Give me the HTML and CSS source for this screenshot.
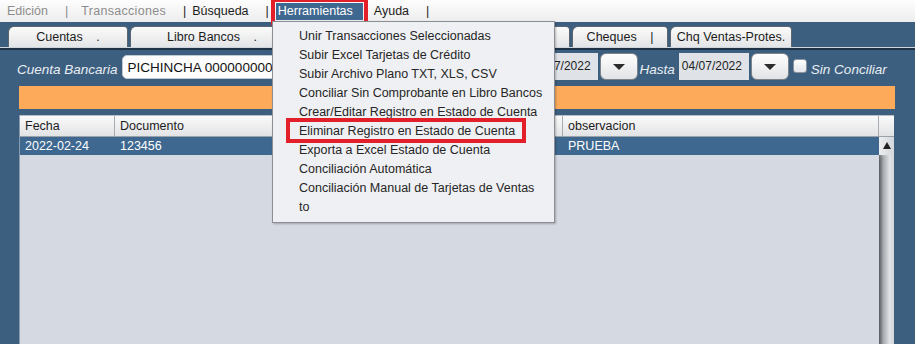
FILE: index.html
```html
<!DOCTYPE html>
<html lang="es">
<head>
    <meta charset="UTF-8">
    <title>Conciliación Bancaria</title>
    <link rel="stylesheet" href="styles.css">
</head>
<body>
    <div class="menubar">
        <span class="mi disabled">Edición</span><span class="sep disabled">|</span>
        <span class="mi disabled spaced">Transacciones</span><span class="sep">|</span>
        <span class="mi">Búsqueda</span><span class="sep">|</span>
        <span class="mi active">Herramientas</span>
        <span class="mi">Ayuda</span><span class="sep">|</span>
    </div>

    <div class="tabs">
        <div class="tab t1">Cuentas <span class="dot">.</span></div>
        <div class="tab t2">Libro Bancos <span class="dot">.</span></div>
        <div class="tab t3"></div>
        <div class="tab t4"></div>
        <div class="tab t5">Cheques <span class="dot">|</span></div>
        <div class="tab t6">Chq Ventas-Protes.</div>
    </div>

    <div class="panel">
        <div class="filters">
            <span class="lbl first">Cuenta Bancaria</span>
            <div class="combo">PICHINCHA 0000000001</div>
            <div class="datefield from">01/07/2022</div>
            <div class="dropbtn"><span class="tri"></span></div>
            <span class="lbl">Hasta</span>
            <div class="datefield">04/07/2022</div>
            <div class="dropbtn"><span class="tri"></span></div>
            <span class="check"></span>
            <span class="lbl last">Sin Conciliar</span>
        </div>

        <div class="banner"></div>

        <div class="grid">
            <div class="thead">
                <div class="th c-fecha">Fecha</div>
                <div class="th c-doc">Documento</div>
                <div class="th c-obs">observacion</div>
                <div class="th c-corner"></div>
            </div>
            <div class="tbody">
                <div class="rows">
                    <div class="row selected">
                        <div class="td c-fecha">2022-02-24</div>
                        <div class="td c-doc">123456</div>
                        <div class="td c-obs">PRUEBA</div>
                    </div>
                </div>
                <div class="vscroll">
                    <div class="up"><span class="tri-up"></span></div>
                    <div class="thumb"></div>
                </div>
            </div>
        </div>
    </div>

    <!-- menu Herramientas abierto -->
    <div class="dropdown">
        <div class="item">Unir Transacciones Seleccionadas</div>
        <div class="item">Subir Excel Tarjetas de Crédito</div>
        <div class="item">Subir Archivo Plano TXT, XLS, CSV</div>
        <div class="item">Conciliar Sin Comprobante en Libro Bancos</div>
        <div class="item">Crear/Editar Registro en Estado de Cuenta</div>
        <div class="item marked">Eliminar Registro en Estado de Cuenta</div>
        <div class="item">Exporta a Excel Estado de Cuenta</div>
        <div class="item">Conciliación Automática</div>
        <div class="item">Conciliación Manual de Tarjetas de Ventas</div>
        <div class="item">to</div>
    </div>
</body>
</html>
```

FILE: styles.css
```css
body {
    margin: 0;
    width: 915px;
    height: 344px;
    overflow: hidden;
    position: relative;
    background: #3d5f7f;
    font-family: "Liberation Sans", Arial, sans-serif;
    font-size: 12.5px;
    color: #1c1c1c;
}

/* barra de menu */
.menubar {
    height: 22px;
    display: flex;
    align-items: center;
    padding-left: 1px;
    background: linear-gradient(#fdfdfd, #ededed);
}

.mi {
    padding: 0 6px;
    line-height: 17px;
}

.sep {
    padding: 0 0 0 11px;
}

.disabled {
    color: #8d8d8d;
}

.spaced {
    letter-spacing: 0.3px;
    padding-left: 13px;
}

.mi.active {
    margin: 0 5px 0 7px;
    padding: 0 10px 0 2px;
    background: #3f6890;
    color: #fff;
    outline: 4px solid #e3202a;
    outline-offset: 1px;
}

/* pestañas */
.tabs {
    height: 21px;
    padding: 4px 0 0 8px;
    display: flex;
    gap: 2px;
    border-bottom: 1px solid #cfd5dc;
    box-shadow: 0 2px 0 #1f3246;
}

.tab {
    box-sizing: border-box;
    height: 21px;
    line-height: 20px;
    text-align: center;
    background: linear-gradient(#fbfbfb, #e3e4e6);
    border: 1px solid #5d6670;
    border-bottom: none;
    border-radius: 6px 4px 0 0;
}

.tab .dot {
    margin-left: 10px;
}

.t1 { width: 120px; }
.t2 { width: 164px; }
.t3 { width: 140px; }
.t4 { width: 132px; }
.t5 { width: 96px; }
.t6 { width: 122px; }

/* panel principal */
.panel {
    height: 296px;
    display: flex;
    flex-direction: column;
}

.filters {
    display: flex;
    height: 27px;
    margin-top: 5px;
    padding-left: 17px;
}

.lbl {
    align-self: flex-end;
    font-style: italic;
    font-size: 13.5px;
    color: #e9eef3;
    padding-bottom: 3px;
    margin: 0 4px 0 2px;
}

.lbl.first {
    margin: 0 4px 0 0;
}

.lbl.last {
    margin-left: 4px;
}

.combo {
    box-sizing: border-box;
    width: 320px;
    height: 24px;
    margin-top: 2px;
    padding: 4px 0 0 5px;
    font-size: 13.5px;
    color: #111;
    background: #fdfdfd;
    border: 1px solid #c3c9d0;
    border-radius: 5px;
    white-space: nowrap;
    overflow: hidden;
}

.datefield {
    box-sizing: border-box;
    width: 70px;
    padding: 6px 0 0 3px;
    font-size: 12px;
    background: #dfe2e7;
    color: #222;
}

.datefield.from {
    margin-left: 86px;
}

.dropbtn {
    box-sizing: border-box;
    width: 38px;
    margin-left: 2px;
    border: 1px solid #7e848b;
    border-radius: 6px;
    background: linear-gradient(#ffffff, #e2e3e5);
    display: flex;
    align-items: center;
    justify-content: center;
}

.tri {
    width: 0;
    height: 0;
    border-left: 6px solid transparent;
    border-right: 6px solid transparent;
    border-top: 6px solid #2c2c2c;
}

.check {
    box-sizing: border-box;
    width: 14px;
    height: 14px;
    margin: 6px 0 0 4px;
    border: 1px solid #8e959c;
    border-radius: 3px;
    background: linear-gradient(#ffffff, #e4e6e9);
}

.banner {
    height: 23px;
    margin: 6px 20px 0 19px;
    background: #fdab5b;
}

/* tabla */
.grid {
    flex: 1;
    margin: 6px 21px 0 19px;
    border-left: 1px solid #8a9bad;
    display: flex;
    flex-direction: column;
    background: #d5d9e1;
}

.thead {
    display: flex;
    height: 20px;
    border-top: 1px solid #b9bec5;
    border-bottom: 1px solid #9aa1a9;
}

.th {
    box-sizing: border-box;
    padding: 3px 0 0 5px;
    background: linear-gradient(#fafafa, #e2e3e5);
    border-right: 1px solid #a7acb2;
}

.c-fecha { width: 95px; }
.c-doc { width: 448px; }
.c-obs { width: 316px; }
.c-corner { width: 15px; border-right: none; }

.tbody {
    flex: 1;
    display: flex;
}

.rows {
    width: 859px;
}

.row {
    display: flex;
    height: 18px;
}

.row.selected {
    background: #3e6890;
    color: #fff;
}

.td {
    box-sizing: border-box;
    padding: 2px 0 0 5px;
}

.vscroll {
    width: 15px;
    display: flex;
    flex-direction: column;
    background: linear-gradient(90deg, #5e6268, #d9dbde 40%, #e9eaec);
}

.up {
    height: 18px;
    background: linear-gradient(90deg, #eceef0, #d3d6da);
    display: flex;
    justify-content: center;
    padding-top: 5px;
    box-sizing: border-box;
}

.tri-up {
    width: 0;
    height: 0;
    border-left: 4px solid transparent;
    border-right: 4px solid transparent;
    border-bottom: 7px solid #222;
}

.thumb {
    flex: 1;
    border-radius: 8px 0 0 0;
    background: linear-gradient(90deg, #55595f, #a9acb1 30%, #e0e2e5 70%, #d2d5d9);
}

/* menu desplegable */
.dropdown {
    position: absolute;
    left: 272px;
    top: 21px;
    width: 281px;
    padding: 5px 0;
    background: #eff0f3;
    border: 1px solid #8b8f95;
    box-shadow: 1px 1px 2px rgba(0, 0, 0, 0.25);
    color: #262626;
}

.item {
    position: relative;
    height: 19px;
    line-height: 19px;
    padding-left: 26px;
    white-space: nowrap;
}

.item.marked::after {
    content: "";
    position: absolute;
    left: 13px;
    top: -4px;
    width: 240px;
    height: 25px;
    box-sizing: border-box;
    border: 4px solid #e3202a;
}
```
